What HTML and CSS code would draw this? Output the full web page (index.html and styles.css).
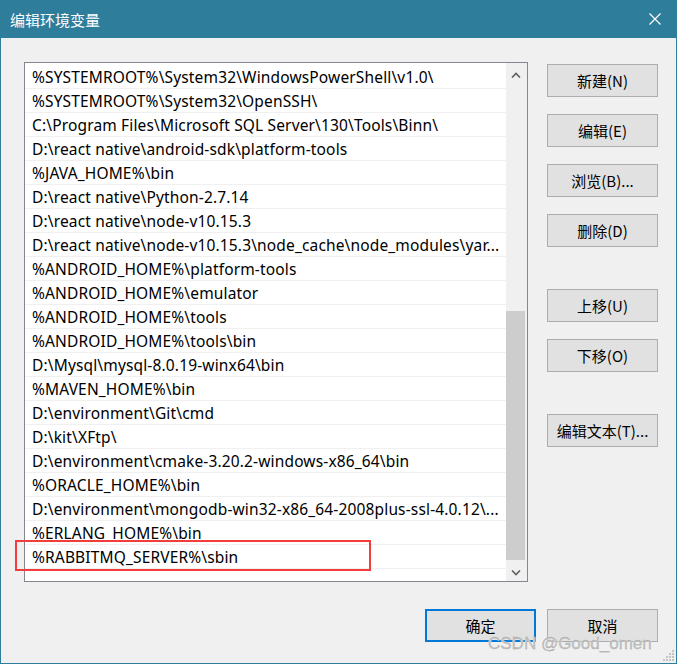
FILE: index.html
```html
<!DOCTYPE html>
<html lang="zh-CN">
<head>
  <meta charset="UTF-8">
  <title>编辑环境变量</title>
  <link rel="stylesheet" href="styles.css">
</head>
<body>
  <div class="window">
    <div class="titlebar">
      <span class="title">编辑环境变量</span>
      <svg class="close" width="12" height="12" viewBox="0 0 12 12">
        <path d="M0.5 0.5 L11.5 11.5 M11.5 0.5 L0.5 11.5" stroke="#fff" stroke-width="1.2" fill="none"/>
      </svg>
    </div>

    <div class="content">
      <div class="listbox">
        <ul class="path-list">
          <li>%SYSTEMROOT%\System32\WindowsPowerShell\v1.0\</li>
          <li>%SYSTEMROOT%\System32\OpenSSH\</li>
          <li>C:\Program Files\Microsoft SQL Server\130\Tools\Binn\</li>
          <li>D:\react native\android-sdk\platform-tools</li>
          <li>%JAVA_HOME%\bin</li>
          <li>D:\react native\Python-2.7.14</li>
          <li>D:\react native\node-v10.15.3</li>
          <li>D:\react native\node-v10.15.3\node_cache\node_modules\yar...</li>
          <li>%ANDROID_HOME%\platform-tools</li>
          <li>%ANDROID_HOME%\emulator</li>
          <li>%ANDROID_HOME%\tools</li>
          <li>%ANDROID_HOME%\tools\bin</li>
          <li>D:\Mysql\mysql-8.0.19-winx64\bin</li>
          <li>%MAVEN_HOME%\bin</li>
          <li>D:\environment\Git\cmd</li>
          <li>D:\kit\XFtp\</li>
          <li>D:\environment\cmake-3.20.2-windows-x86_64\bin</li>
          <li>%ORACLE_HOME%\bin</li>
          <li>D:\environment\mongodb-win32-x86_64-2008plus-ssl-4.0.12\...</li>
          <li>%ERLANG_HOME%\bin</li>
          <li>%RABBITMQ_SERVER%\sbin</li>
        </ul>
        <div class="scrollbar">
          <div class="scroll-btn">
            <svg width="10" height="6" viewBox="0 0 10 6"><path d="M1 5.5 L5 1.5 L9 5.5" stroke="#606060" stroke-width="1.6" fill="none"/></svg>
          </div>
          <div class="scroll-track"><div class="scroll-thumb"></div></div>
          <div class="scroll-btn down">
            <svg width="10" height="6" viewBox="0 0 10 6"><path d="M1 0.5 L5 4.5 L9 0.5" stroke="#606060" stroke-width="1.6" fill="none"/></svg>
          </div>
        </div>
      </div>

      <div class="side-buttons">
        <button class="btn">新建(N)</button>
        <button class="btn">编辑(E)</button>
        <button class="btn">浏览(B)...</button>
        <button class="btn">删除(D)</button>
        <button class="btn group">上移(U)</button>
        <button class="btn">下移(O)</button>
        <button class="btn group">编辑文本(T)...</button>
      </div>
    </div>

    <div class="footer">
      <button class="btn primary">确定</button>
      <button class="btn">取消</button>
    </div>

    <!-- 标注框和水印 -->
    <div class="highlight"></div>
    <div class="watermark">CSDN @Good_omen</div>
    <svg class="grip" width="12" height="12" viewBox="0 0 12 12" fill="#c4c4c4">
      <rect x="9" y="1" width="2" height="2"/>
      <rect x="6" y="4" width="2" height="2"/><rect x="9" y="4" width="2" height="2"/>
      <rect x="3" y="7" width="2" height="2"/><rect x="6" y="7" width="2" height="2"/><rect x="9" y="7" width="2" height="2"/>
      <rect x="0" y="10" width="2" height="2"/><rect x="3" y="10" width="2" height="2"/><rect x="6" y="10" width="2" height="2"/><rect x="9" y="10" width="2" height="2"/>
    </svg>
  </div>
</body>
</html>
```

FILE: styles.css
```css
body {
  margin: 0;
  padding: 0;
  background-color: #f0f0f0;
  font-family: "Noto Sans", "Noto Sans CJK SC", sans-serif;
  font-size: 15px;
  color: #000;
}
.window {
  position: relative;
  width: 677px;
  height: 664px;
  box-sizing: border-box;
  border: 1px solid #2e7d9a;
  border-top: none;
  background-color: #f0f0f0;
  display: flex;
  flex-direction: column;
}
.titlebar {
  height: 38px;
  background-color: #2e7d9a;
  display: flex;
  align-items: center;
  justify-content: space-between;
  padding: 0 15px 0 9px;
  flex-shrink: 0;
}
.title {
  color: #fff;
  font-family: "Noto Sans CJK SC", sans-serif;
  font-size: 15px;
}
.close {
  display: block;
}
.content {
  display: flex;
  gap: 19px;
  padding: 24px 0 0 23px;
}
.listbox {
  width: 504px;
  height: 520px;
  box-sizing: border-box;
  border: 1px solid #828790;
  background-color: #fff;
  display: flex;
}
.path-list {
  flex: 1;
  list-style: none;
  margin: 0;
  padding: 2px 0 0 0;
  overflow: hidden;
}
.path-list li {
  height: 23px;
  line-height: 24px;
  border-bottom: 1px solid #f0f0f0;
  padding-left: 7px;
  font-size: 15.5px;
  letter-spacing: 0.15px;
  white-space: nowrap;
  overflow: hidden;
}
.scrollbar {
  width: 21px;
  background-color: #f0f0f0;
  display: flex;
  flex-direction: column;
}
.scroll-btn {
  height: 21px;
  display: flex;
  align-items: center;
  justify-content: center;
  padding-right: 2px;
}
.scroll-btn svg {
  display: block;
  margin-top: 3px;
}
.scroll-btn.down svg {
  margin-top: 0;
  margin-bottom: -4px;
}
.scroll-track {
  flex: 1;
  display: flex;
  flex-direction: column;
  justify-content: flex-end;
}
.scroll-thumb {
  height: 249px;
  margin-right: 2px;
  background-color: #cdcdcd;
}
.side-buttons {
  display: flex;
  flex-direction: column;
  gap: 17px;
  padding-top: 2px;
}
.btn {
  width: 111px;
  height: 33px;
  box-sizing: border-box;
  border: 1px solid #adadad;
  background-color: #e1e1e1;
  font-family: "Noto Sans CJK SC", sans-serif;
  font-size: 15px;
  color: #000;
  padding: 0;
  margin: 0;
}
.btn.group {
  margin-top: 25px;
}
.btn.primary {
  border: 2px solid #0078d7;
}
.footer {
  display: flex;
  justify-content: flex-end;
  gap: 11px;
  padding: 27px 18px 0 0;
}
.highlight {
  position: absolute;
  left: 14px;
  top: 540px;
  width: 356px;
  height: 31px;
  box-sizing: border-box;
  border: 2px solid #f23d3d;
}
.watermark {
  position: absolute;
  left: 487px;
  top: 635px;
  line-height: 17px;
  font-family: "Liberation Sans", Arial, sans-serif;
  font-size: 17px;
  color: #c3c3c3;
  text-shadow: 0 0 1px #fff, 0 0 1px #fff;
  -webkit-text-stroke: 0.3px #a0a0a0;
}
.grip {
  position: absolute;
  right: 1px;
  bottom: 2px;
}
```
